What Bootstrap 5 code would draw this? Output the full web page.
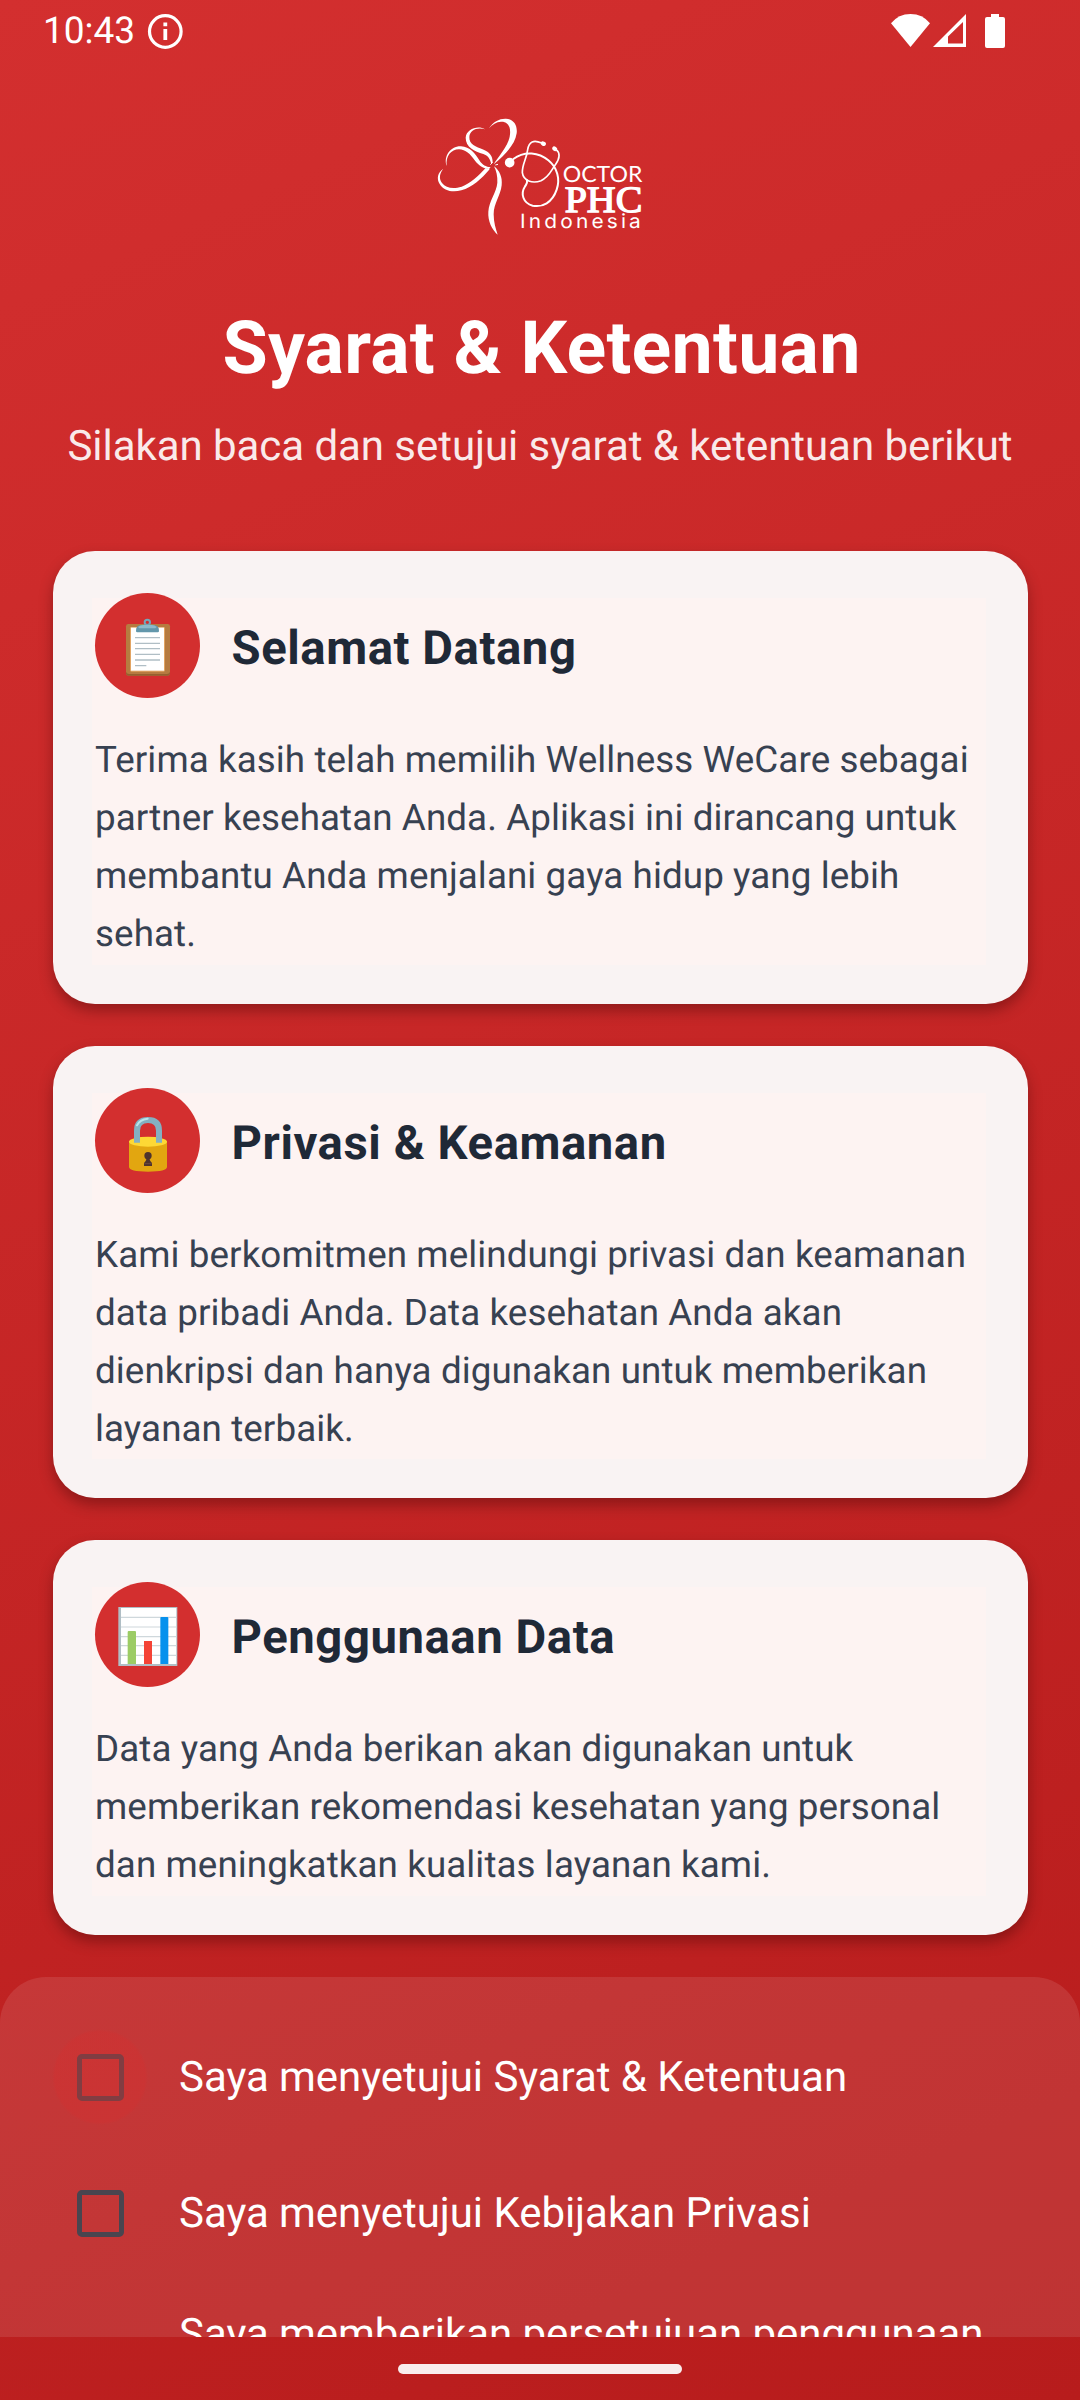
<!DOCTYPE html>
<html lang="id">
<head>
<meta charset="utf-8">
<meta name="viewport" content="width=device-width, initial-scale=1">
<title>Syarat &amp; Ketentuan</title>
<link rel="stylesheet" href="https://cdn.jsdelivr.net/npm/bootstrap@5.3.0/dist/css/bootstrap.min.css">
<style>
body { font-family: Roboto, "Noto Sans", sans-serif; background: #b71c1c; text-rendering: geometricPrecision; }
.screen { width: 1080px; height: 2400px; background: linear-gradient(155.8deg, #d32f2f, #b71c1c); }
.status-bar { height: 62px; padding: 0 75px 0 43px; }
.clock { font-size: 37px; line-height: 64px; }
.info-mark { margin-left: 5px; }
.brand { height: 150px; margin-top: 38px; }
.headline { font-size: 73.5px; line-height: 100px; margin-top: 48px; letter-spacing: .25px; padding-left: 3px; }
.subline { font-size: 42px; line-height: 58px; margin-top: 19.500px; opacity: .9; white-space: nowrap; letter-spacing: -.05px; }
.terms { padding: 0 52.5px; margin-top: 75.75px; gap: 42px; }
.term-card { --bs-card-border-width: 0; --bs-card-border-radius: 42px; padding: 42px;
  background: linear-gradient(#fdf3f2, #fdf3f2) 39px 47px / calc(100% - 81px) calc(100% - 86px) no-repeat, #f9f3f3;
  box-shadow: 0 7px 14px rgba(40,0,0,.34); }
.term-icon { width: 105px; height: 105px; background: #d32f2f; }
.term-head { gap: 32px; margin-bottom: 31.5px; }
.term-title { font-size: 47.25px; line-height: 56px; color: #1f2937; padding-top: 5px; letter-spacing: .56px; }
.term-text { font-size: 36.75px; line-height: 58px; color: #374151; white-space: nowrap; position: relative; top: 1.5px; letter-spacing: .09px; padding-left: .5px; }
.consent { height: 359.7px; margin-top: 42.3px; background: rgba(255,255,255,.1); border-radius: 46px 46px 0 0; padding: 32px 52px; }
.consent-row { height: 136.2px; gap: 31px; }
.consent-row.wrapped { padding-top: 22.500px; }
.halo { width: 96px; height: 96px; }
.halo.active { background: radial-gradient(circle closest-side, rgba(211,47,47,.4) 94%, transparent); }
.tick { width: 47px; height: 47px; border: 5px solid #49454f; border-radius: 5px; }
.active .tick { border-color: #813d42; }
.consent-label { font-size: 42px; line-height: 58px; white-space: nowrap; padding-top: 2px; letter-spacing: -.05px; }
.nav-area { height: 63px; }
.pill { width: 284px; height: 10px; border-radius: 5px; background: #f9eded; margin-top: 27px; }
</style>
</head>
<body>
<main class="screen d-flex flex-column overflow-hidden text-white">
  <header class="status-bar d-flex justify-content-between flex-shrink-0">
    <div class="d-flex">
      <span class="clock">10:43</span>
      <svg class="info-mark" width="50" height="62" viewBox="140 0 50 62" fill="none" stroke="#fff"><circle cx="165.300" cy="31.500" r="15.800" stroke-width="3.200"/><path d="M165.300 22.500v3.800M165.300 29v11" stroke-width="3.800"/></svg>
    </div>
    <svg width="120" height="62" viewBox="885 0 120 62" fill="#fff"><path d="M910.500 47 891 23.300Q898.500 14 910.500 14T930 23.300Z"/><path fill-rule="evenodd" d="M933 47 966 14V47ZM948 43.500H963V22L948 36.500Z"/><path d="M991 14h8v3h4q2 0 2 2v27q0 2-2 2h-16q-2 0-2-2V19q0-2 2-2h4Z"/></svg>
  </header>

  <div class="brand d-flex justify-content-center flex-shrink-0">
    <svg width="240" height="150" viewBox="0 0 720 450" fill="#fff">
      <path d="M207 85C219 65 239 55 258 56C281 58 293 75 290 100C285 135 254 165 221 193C235 169 262 142 269 110C275 78 261 64 243 65C229 66 217 73 207 85Z"/>
      <path d="M195 88C174 75 139 87 137 113C137 142 164 154 190 162C204 167 211 177 214 193L218 187C218 166 208 157 191 149C167 140 147 133 148 111C149 91 171 81 195 88Z"/>
      <path d="M80 198C70 169 91 138 123 139C151 141 164 159 178 181C187 195 198 201 212 202L207 207C190 206 176 197 164 181C151 162 137 149 117 148C93 148 77 168 80 198Z"/>
      <path d="M70 206C53 217 49 236 59 252C71 273 98 278 124 271C158 262 184 237 209 208L197 204C174 229 151 250 125 260C99 268 78 264 66 249C56 235 59 219 70 206Z"/>
      <path d="M222 199C238 211 248 231 245 256C242 286 221 310 221 343C221 367 227 386 233 404C216 389 203 363 205 335C207 302 230 276 232 248C233 229 229 212 222 199Z"/>
      <path d="M211 194l7 -7M226 195l8-2" stroke="#fff" stroke-width="3"/>
      <circle cx="269" cy="188" r="14.500"/>
      <g fill="none" stroke="#fff" stroke-width="6" stroke-linecap="round">
        <path d="M280 177C315 151 357 158 385 181C412 203 421 237 410 269C397 308 367 323 338 317C308 309 302 280 314 261C319 252 323 250 321 241"/>
        <path d="M365 129C341 119 327 124 323 149C320 177 306 192 307 218C310 242 337 252 363 242C388 231 394 210 407 193C417 178 424 161 408 148" stroke-width="5"/>
      </g>
      <ellipse cx="370" cy="131" rx="8" ry="6.500" transform="rotate(25 370 131)"/>
      <ellipse cx="404" cy="146" rx="8" ry="6.500" transform="rotate(35 404 146)"/>
      <text x="428" y="247" font-family="Lato" font-size="67" textLength="239" lengthAdjust="spacingAndGlyphs">OCTOR</text>
      <text x="434" y="335" font-family="Liberation Serif" font-size="112" stroke="#fff" stroke-width="4" textLength="233" lengthAdjust="spacingAndGlyphs">PHC</text>
      <text x="300" y="384" font-family="Inter" font-size="59" letter-spacing="9" textLength="372" lengthAdjust="spacingAndGlyphs">Indonesia</text>
    </svg>
  </div>

  <h1 class="headline fw-bold text-center mb-0 flex-shrink-0">Syarat &amp; Ketentuan</h1>
  <p class="subline text-center mb-0 flex-shrink-0">Silakan baca dan setujui syarat &amp; ketentuan berikut</p>

  <section class="terms d-flex flex-column flex-shrink-0">
    <article class="card term-card">
      <div class="term-head d-flex align-items-center">
        <div class="term-icon rounded-circle flex-shrink-0">
          <svg class="d-block" width="105" height="105" viewBox="45 39 315 315"><rect x="138" y="132" width="132" height="155" rx="7" fill="#b67b40"/><path d="M138 280q0 7 7 7h118q7 0 7-7v-4q-3 6-9 6H147q-6 0-9-6Z" fill="#95602f"/><rect x="150" y="141" width="105" height="134" rx="4" fill="#e2a463"/><rect x="153" y="143" width="99" height="129" fill="#fff"/><path d="M165 173h75M165 190h75M165 206h75M165 223h75M165 240h75M165 257h34" stroke="#b0bec5" stroke-width="4"/><circle cx="202" cy="127" r="8" fill="none" stroke="#74a8bb" stroke-width="6"/><path d="M168 153q-1-19 20-19h28q22 0 21 19 0 4-4 4h-61q-4 0-4-4Z" fill="#6297ab"/><path d="M174 141q7-6 16-6h25q9 0 15 6l-4 4h-48Z" fill="#8dbbcb"/></svg>
        </div>
        <h2 class="term-title fw-bold mb-0">Selamat Datang</h2>
      </div>
      <p class="term-text mb-0">Terima kasih telah memilih Wellness WeCare sebagai<br>partner kesehatan Anda. Aplikasi ini dirancang untuk<br>membantu Anda menjalani gaya hidup yang lebih<br>sehat.</p>
    </article>
    <article class="card term-card">
      <div class="term-head d-flex align-items-center">
        <div class="term-icon rounded-circle flex-shrink-0">
          <svg class="d-block" width="105" height="105" viewBox="45 54 315 315"><path d="M147 214V291q0 14 57 14t57-14V214Z" fill="#e2a610"/><ellipse cx="204" cy="215" rx="57" ry="15" fill="#fdd835"/><path d="M171 218V182q0-32 33-32t33 32v36" fill="none" stroke="#84b0c1" stroke-width="18"/><path d="M171 166q8-17 32-20" fill="none" stroke="#b9e4ea" stroke-width="6" stroke-linecap="round"/><circle cx="204" cy="257" r="11" fill="#4e342e"/><path d="M199 262q2 9-7 17v9h24v-9q-9-8-7-17Z" fill="#4e342e"/><path d="M193 281h22" stroke="#795548" stroke-width="2"/></svg>
        </div>
        <h2 class="term-title fw-bold mb-0">Privasi &amp; Keamanan</h2>
      </div>
      <p class="term-text mb-0">Kami berkomitmen melindungi privasi dan keamanan<br>data pribadi Anda. Data kesehatan Anda akan<br>dienkripsi dan hanya digunakan untuk memberikan<br>layanan terbaik.</p>
    </article>
    <article class="card term-card">
      <div class="term-head d-flex align-items-center">
        <div class="term-icon rounded-circle flex-shrink-0">
          <svg class="d-block" width="105" height="105" viewBox="45 66 315 315"><rect x="115" y="141" width="177" height="177" fill="#b0bec5"/><rect x="123" y="144" width="166" height="168" fill="#fff"/><path d="M123 172h166M123 201h166M123 230h166M123 257h166M123 286h166" stroke="#cfd8dc" stroke-width="3.500"/><path d="M143 312V216q0-3 3-3h19q3 0 3 3v96Z" fill="#9ccc65"/><path d="M192 312V243h24v69Z" fill="#f44336"/><path d="M241 312V174q0-3 3-3h18q3 0 3 3v138Z" fill="#0691ed"/></svg>
        </div>
        <h2 class="term-title fw-bold mb-0">Penggunaan Data</h2>
      </div>
      <p class="term-text mb-0">Data yang Anda berikan akan digunakan untuk<br>memberikan rekomendasi kesehatan yang personal<br>dan meningkatkan kualitas layanan kami.</p>
    </article>
  </section>

  <section class="consent overflow-hidden flex-shrink-0">
    <div class="consent-row d-flex align-items-center">
      <span class="halo active rounded-circle d-flex align-items-center justify-content-center flex-shrink-0"><span class="tick"></span></span>
      <span class="consent-label">Saya menyetujui Syarat &amp; Ketentuan</span>
    </div>
    <div class="consent-row d-flex align-items-center">
      <span class="halo rounded-circle d-flex align-items-center justify-content-center flex-shrink-0"><span class="tick"></span></span>
      <span class="consent-label">Saya menyetujui Kebijakan Privasi</span>
    </div>
    <div class="consent-row wrapped d-flex">
      <span class="halo flex-shrink-0"></span>
      <span class="consent-label">Saya memberikan persetujuan penggunaan</span>
    </div>
  </section>

  <footer class="nav-area d-flex justify-content-center flex-shrink-0"><div class="pill"></div></footer>
</main>
<script src="https://cdn.jsdelivr.net/npm/bootstrap@5.3.0/dist/js/bootstrap.bundle.min.js"></script>
</body>
</html>
